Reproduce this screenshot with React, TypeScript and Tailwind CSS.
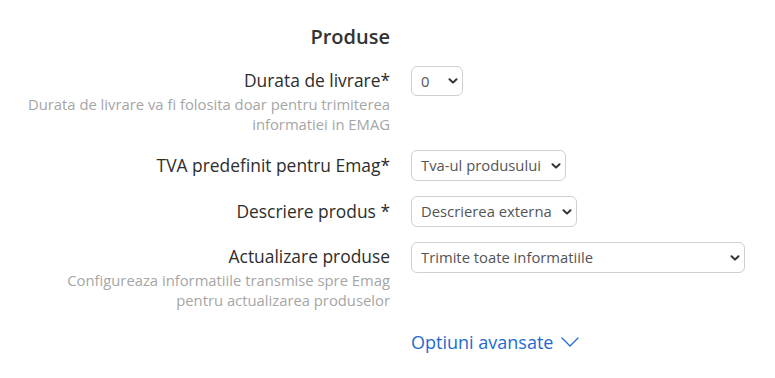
import React from 'react';

function Chevron({ className }: { className?: string }) {
  return (
    <svg viewBox="0 0 10 6" className={className} fill="none" stroke="currentColor" strokeWidth="2" strokeLinecap="round" strokeLinejoin="round">
      <path d="M1.5 1.2 5 4.6 8.5 1.2" />
    </svg>
  );
}

function Select({ value, width, height = 'h-[31px]' }: { value: string; width: string; height?: string }) {
  return (
    <div className={`relative ${width} ${height}`}>
      <select
        defaultValue={value}
        className="h-full w-full appearance-none rounded-[6px] border border-[#cfcfcf] bg-white pl-[9px] pr-[16px] text-[14.8px] text-[#555] outline-none"
      >
        <option>{value}</option>
      </select>
      <Chevron className="pointer-events-none absolute right-[5px] top-1/2 h-[6px] w-[10px] -translate-y-1/2 text-[#333]" />
    </div>
  );
}

function Row({ label, hint, children, leading = 'leading-[28px]' }: { label: string; hint?: string[]; children: React.ReactNode; leading?: string }) {
  return (
    <div className="flex items-start">
      <div className="w-[390px] text-right">
        <div className={`text-[17.4px] text-[#2d2d2d] ${leading}`}>{label}</div>
        {hint && (
          <div className="text-[14.8px] leading-[20px] text-[#a6a6a6]">
            {hint.map((h) => (
              <div key={h}>{h}</div>
            ))}
          </div>
        )}
      </div>
      <div className="ml-[21px]">{children}</div>
    </div>
  );
}

export default function App() {
  return (
    <div className="h-[378px] w-[775px] bg-white pt-[23px]" style={{ fontFamily: '"Open Sans", sans-serif' }}>
      <div className="w-[390px] text-right text-[20px] font-semibold leading-[28px] text-[#333]">Produse</div>

      <div className="mt-[15px] flex flex-col">
        <Row label="Durata de livrare*" hint={['Durata de livrare va fi folosita doar pentru trimiterea', 'informatiei in EMAG']}>
          <Select value="0" width="w-[52px]" height="h-[30px]" />
        </Row>

        <div className="mt-[16px]">
          <Row label="TVA predefinit pentru Emag*" leading="leading-[31px]">
            <Select value="Tva-ul produsului" width="w-[155px]" />
          </Row>
        </div>

        <div className="mt-[15px]">
          <Row label="Descriere produs *" leading="leading-[31px]">
            <Select value="Descrierea externa" width="w-[166px]" />
          </Row>
        </div>

        <div className="mt-[15px]">
          <Row label="Actualizare produse" hint={['Configureaza informatiile transmise spre Emag', 'pentru actualizarea produselor']}>
            <Select value="Trimite toate informatiile" width="w-[334px]" />
          </Row>
        </div>
      </div>

      <div className="ml-[411px] mt-[20px] flex items-center gap-[8px] text-[18px] leading-[24px] text-[#1f6bcf]">
        <span>Optiuni avansate</span>
        <svg viewBox="0 0 18 10" className="h-[10px] w-[18px]" fill="none" stroke="currentColor" strokeWidth="1.3" strokeLinecap="round" strokeLinejoin="round">
          <path d="M1 1 9 9 17 1" />
        </svg>
      </div>
    </div>
  );
}
